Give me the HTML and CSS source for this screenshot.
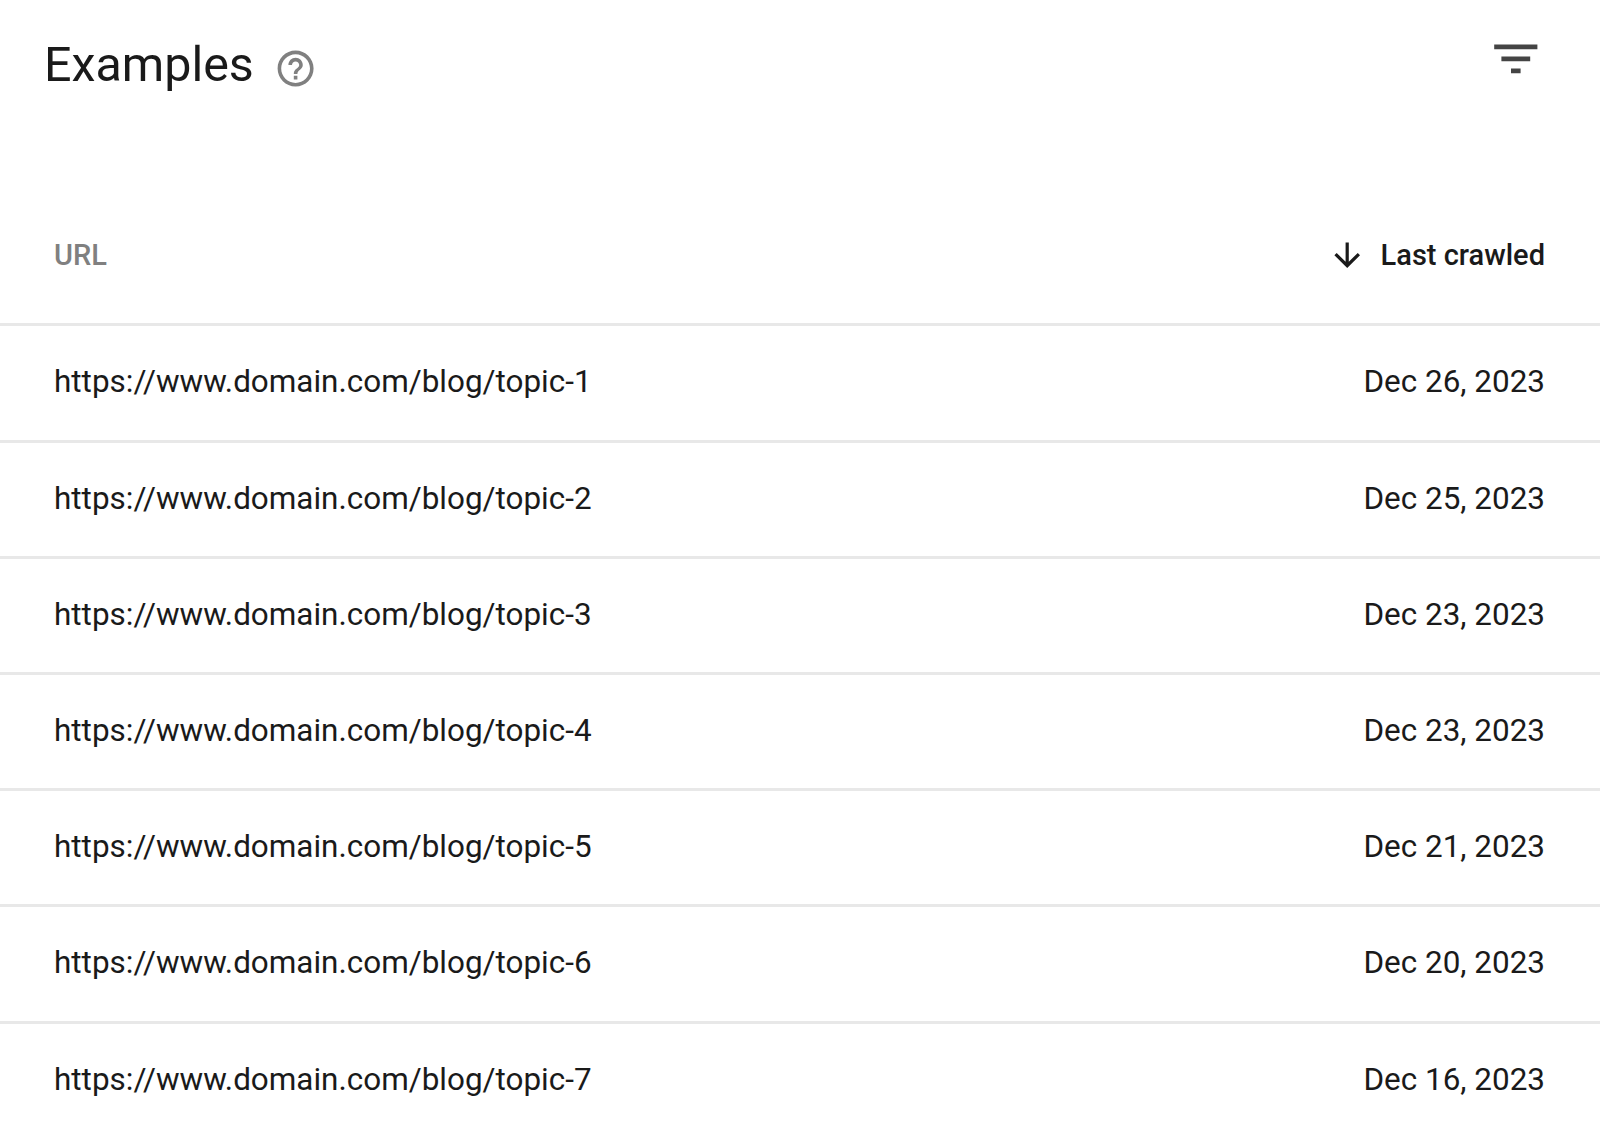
FILE: index.html
```html
<!DOCTYPE html>
<html lang="en">
<head>
<meta charset="utf-8">
<title>Examples</title>
<link rel="stylesheet" href="styles.css">
</head>
<body>
<main class="card">
  <header class="head">
    <div class="title-wrap">
      <h1 class="title">Examples</h1>
      <svg class="help" viewBox="0 0 24 24" aria-hidden="true"><path d="M11 18h2v-2h-2v2zm1-16C6.48 2 2 6.48 2 12s4.48 10 10 10 10-4.48 10-10S17.52 2 12 2zm0 18c-4.41 0-8-3.59-8-8s3.59-8 8-8 8 3.59 8 8-3.59 8-8 8zm0-14c-2.21 0-4 1.79-4 4h2c0-1.1.9-2 2-2s2 .9 2 2c0 2-3 1.75-3 5h2c0-2.25 3-2.5 3-5 0-2.21-1.79-4-4-4z"/></svg>
    </div>
    <svg class="filter" viewBox="0 0 24 24" aria-hidden="true"><path d="M3 6h18v2H3zM6 11h12v2H6zM10 16h4v2h-4z"/></svg>
  </header>
  <div class="row row-head">
    <span class="col-url">URL</span>
    <span class="col-sort">
      <svg class="arrow" viewBox="0 0 24 24" aria-hidden="true"><path d="M20 12l-1.41-1.41L13 16.17V4h-2v12.17l-5.58-5.59L4 12l8 8 8-8z"/></svg>
      Last crawled
    </span>
  </div>
  <div class="row"><span>https://www.domain.com/blog/topic-1</span><span>Dec 26, 2023</span></div>
  <div class="row"><span>https://www.domain.com/blog/topic-2</span><span>Dec 25, 2023</span></div>
  <div class="row"><span>https://www.domain.com/blog/topic-3</span><span>Dec 23, 2023</span></div>
  <div class="row"><span>https://www.domain.com/blog/topic-4</span><span>Dec 23, 2023</span></div>
  <div class="row"><span>https://www.domain.com/blog/topic-5</span><span>Dec 21, 2023</span></div>
  <div class="row"><span>https://www.domain.com/blog/topic-6</span><span>Dec 20, 2023</span></div>
  <div class="row row-last"><span>https://www.domain.com/blog/topic-7</span><span>Dec 16, 2023</span></div>
</main>
</body>
</html>
```
FILE: styles.css
```css
html, body {
  margin: 0;
  padding: 0;
  background: #fff;
}
body {
  height: 1135px;
  overflow: hidden;
  font-family: Roboto, "Liberation Sans", sans-serif;
  color: #1a1a1a;
}
.card {
  display: flex;
  flex-direction: column;
}
.head {
  display: flex;
  justify-content: space-between;
  align-items: flex-start;
  height: 210.2px;
  padding: 36px 55.5px 0 44px;
  box-sizing: border-box;
}
.title-wrap {
  display: flex;
  align-items: center;
  gap: 20px;
}
.title {
  margin: 0;
  font-size: 48.4px;
  line-height: 58px;
  font-weight: 400;
  color: #1a1a1a;
}
.help {
  width: 43.2px;
  height: 43.2px;
  fill: #808080;
  margin-top: 8px;
}
.filter {
  width: 57.6px;
  height: 57.6px;
  fill: #444;
  margin-top: -6px;
}
.row {
  display: flex;
  justify-content: space-between;
  align-items: center;
  height: 116.2px;
  box-sizing: border-box;
  padding: 0 55px 2px 54px;
  border-bottom: 3px solid #e8e8e8;
  font-size: 31.45px;
  color: #1a1a1a;
}
.row-last {
  border-bottom: 0;
  padding-bottom: 5px;
}
.row-head {
  font-size: 29px;
  font-weight: 500;
  padding-bottom: 24px;
}
.col-url {
  color: #808080;
}
.col-sort {
  display: flex;
  align-items: center;
  gap: 14px;
}
.arrow {
  width: 38.4px;
  height: 38.4px;
  fill: #1a1a1a;
}
```
